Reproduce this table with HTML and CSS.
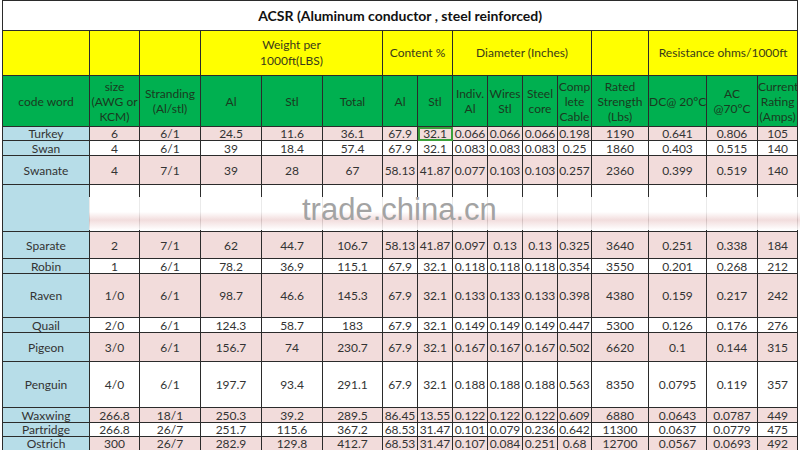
FILE: index.html
```html
<!DOCTYPE html>
<html>
<head>
<meta charset="utf-8">
<link rel="stylesheet" href="styles.css">
</head>
<body>
<div class="wrap">
<table class="acsr">
<colgroup>
<col style="width:87px"><col style="width:50px"><col style="width:61px"><col style="width:61px"><col style="width:61px"><col style="width:60px"><col style="width:35px"><col style="width:35px"><col style="width:35px"><col style="width:35px"><col style="width:35px"><col style="width:34px"><col style="width:57px"><col style="width:58px"><col style="width:51px"><col style="width:40px">
</colgroup>
<tr class="r-title"><td colspan="16" class="title">ACSR (Aluminum conductor , steel reinforced)</td></tr>
<tr class="r-yellow">
<td></td><td></td><td></td>
<td colspan="3">Weight per<br>1000ft(LBS)</td>
<td colspan="2">Content %</td>
<td colspan="4">Diameter (Inches)</td>
<td></td>
<td colspan="3">Resistance ohms/1000ft</td>
</tr>
<tr class="r-green">
<td>code word</td><td>size<br>(AWG or<br>KCM)</td><td>Stranding<br>(Al/stl)</td><td>Al</td><td>Stl</td><td>Total</td><td>Al</td><td>Stl</td><td>Indiv.<br>Al</td><td>Wires<br>Stl</td><td>Steel<br>core</td><td>Comp<br>lete<br>Cable</td><td>Rated<br>Strength<br>(Lbs)</td><td>DC@ 20°C</td><td>AC<br>@70°C</td><td>Current<br>Rating<br>(Amps)</td>
</tr>
<tr class="pink h14"><td class="code">Turkey</td><td>6</td><td>6/1</td><td>24.5</td><td>11.6</td><td>36.1</td><td>67.9</td><td class="sel">32.1</td><td>0.066</td><td>0.066</td><td>0.066</td><td>0.198</td><td>1190</td><td>0.641</td><td>0.806</td><td>105</td></tr>
<tr class="white h15"><td class="code">Swan</td><td>4</td><td>6/1</td><td>39</td><td>18.4</td><td>57.4</td><td>67.9</td><td>32.1</td><td>0.083</td><td>0.083</td><td>0.083</td><td>0.25</td><td>1860</td><td>0.403</td><td>0.515</td><td>140</td></tr>
<tr class="pink h29"><td class="code">Swanate</td><td>4</td><td>7/1</td><td>39</td><td>28</td><td>67</td><td>58.13</td><td>41.87</td><td>0.077</td><td>0.103</td><td>0.103</td><td>0.257</td><td>2360</td><td>0.399</td><td>0.519</td><td>140</td></tr>
<tr class="white h47"><td class="code"></td><td></td><td></td><td></td><td></td><td></td><td></td><td></td><td></td><td></td><td></td><td></td><td></td><td></td><td></td><td></td></tr>
<tr class="pink h27"><td class="code">Sparate</td><td>2</td><td>7/1</td><td>62</td><td>44.7</td><td>106.7</td><td>58.13</td><td>41.87</td><td>0.097</td><td>0.13</td><td>0.13</td><td>0.325</td><td>3640</td><td>0.251</td><td>0.338</td><td>184</td></tr>
<tr class="white h15"><td class="code">Robin</td><td>1</td><td>6/1</td><td>78.2</td><td>36.9</td><td>115.1</td><td>67.9</td><td>32.1</td><td>0.118</td><td>0.118</td><td>0.118</td><td>0.354</td><td>3550</td><td>0.201</td><td>0.268</td><td>212</td></tr>
<tr class="pink h44"><td class="code">Raven</td><td>1/0</td><td>6/1</td><td>98.7</td><td>46.6</td><td>145.3</td><td>67.9</td><td>32.1</td><td>0.133</td><td>0.133</td><td>0.133</td><td>0.398</td><td>4380</td><td>0.159</td><td>0.217</td><td>242</td></tr>
<tr class="white h15"><td class="code">Quail</td><td>2/0</td><td>6/1</td><td>124.3</td><td>58.7</td><td>183</td><td>67.9</td><td>32.1</td><td>0.149</td><td>0.149</td><td>0.149</td><td>0.447</td><td>5300</td><td>0.126</td><td>0.176</td><td>276</td></tr>
<tr class="pink h29"><td class="code">Pigeon</td><td>3/0</td><td>6/1</td><td>156.7</td><td>74</td><td>230.7</td><td>67.9</td><td>32.1</td><td>0.167</td><td>0.167</td><td>0.167</td><td>0.502</td><td>6620</td><td>0.1</td><td>0.144</td><td>315</td></tr>
<tr class="white h46"><td class="code">Penguin</td><td>4/0</td><td>6/1</td><td>197.7</td><td>93.4</td><td>291.1</td><td>67.9</td><td>32.1</td><td>0.188</td><td>0.188</td><td>0.188</td><td>0.563</td><td>8350</td><td>0.0795</td><td>0.119</td><td>357</td></tr>
<tr class="pink h15"><td class="code">Waxwing</td><td>266.8</td><td>18/1</td><td>250.3</td><td>39.2</td><td>289.5</td><td>86.45</td><td>13.55</td><td>0.122</td><td>0.122</td><td>0.122</td><td>0.609</td><td>6880</td><td>0.0643</td><td>0.0787</td><td>449</td></tr>
<tr class="white h13"><td class="code">Partridge</td><td>266.8</td><td>26/7</td><td>251.7</td><td>115.6</td><td>367.2</td><td>68.53</td><td>31.47</td><td>0.101</td><td>0.079</td><td>0.236</td><td>0.642</td><td>11300</td><td>0.0637</td><td>0.0779</td><td>475</td></tr>
<tr class="pink h14"><td class="code">Ostrich</td><td>300</td><td>26/7</td><td>282.9</td><td>129.8</td><td>412.7</td><td>68.53</td><td>31.47</td><td>0.107</td><td>0.084</td><td>0.251</td><td>0.68</td><td>12700</td><td>0.0567</td><td>0.0693</td><td>492</td></tr>
</table>
<div class="haze"></div>
<div class="watermark">trade.china.cn</div>
</div>
</body>
</html>
```
FILE: styles.css
```css
html, body {
  margin: 0;
  padding: 0;
  background: #ffffff;
}
.wrap {
  position: relative;
  width: 800px;
  height: 450px;
  overflow: hidden;
}
.acsr {
  margin-left: 2px;
  border-collapse: collapse;
  table-layout: fixed;
  width: 795px;
  font-family: Lato, "Open Sans", sans-serif;
  font-size: 12px;
  color: #333;
}
.acsr td {
  border: 1px solid #2b2b2b;
  padding: 0;
  text-align: center;
  vertical-align: middle;
  line-height: 13px;
  white-space: nowrap;
  overflow: hidden;
}
.r-title { height: 30px; }
.title {
  background: #ffffff;
  font-weight: 700;
  font-size: 14px;
  color: #111;
  padding-left: 2px;
}
.r-yellow { height: 45px; }
.r-yellow td {
  background: #ffff00;
  color: #3a3a1a;
  line-height: 16px;
}
.r-green { height: 51px; }
.r-green td {
  background: #00b050;
  color: #1a3a20;
  line-height: 15px;
}
.pink td { background: #f2dcdb; }
.white td { background: #ffffff; }
.acsr td.code { background: #b7dde8; }
.h13 { height: 13px; }
.h14 { height: 14px; }
.h15 { height: 15px; }
.h27 { height: 27px; }
.h29 { height: 29px; }
.h44 { height: 44px; }
.h46 { height: 46px; }
.h47 { height: 47px; }
.acsr td.sel {
  outline: 2px solid #3aa03a;
  outline-offset: -2px;
}
.haze {
  position: absolute;
  left: 89px;
  top: 197px;
  width: 711px;
  height: 33px;
  background: linear-gradient(to bottom, rgba(255,255,255,0.9) 0%, rgba(255,255,255,0.9) 45%, rgba(240,215,215,0.85) 70%, rgba(255,255,255,0.9) 100%);
}
.watermark {
  position: absolute;
  left: 302px;
  top: 192px;
  font-family: "Liberation Sans", Arial, sans-serif;
  font-size: 31px;
  color: #a3a3a3;
}
```
